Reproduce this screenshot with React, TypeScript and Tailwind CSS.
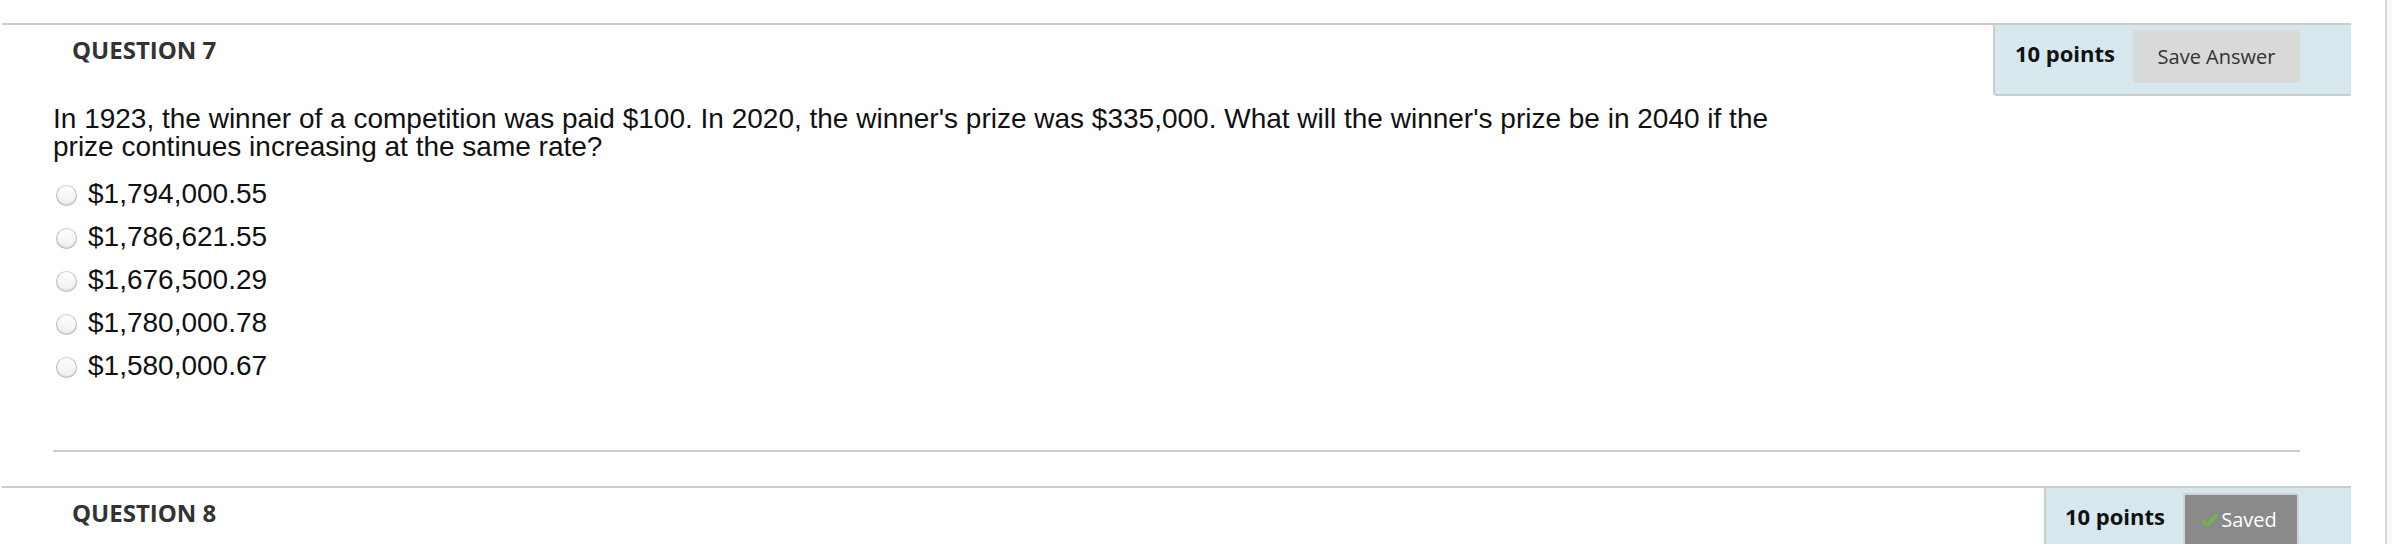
import React from "react";

const options = [
  "$1,794,000.55",
  "$1,786,621.55",
  "$1,676,500.29",
  "$1,780,000.78",
  "$1,580,000.67",
];

function Radio() {
  return (
    <span className="mt-[3px] h-[21px] w-[21px] shrink-0 rounded-full border border-[#b9b9b9] border-t-[#d0d0d0] bg-gradient-to-b from-white to-[#eeeeee] shadow-[inset_0_-1px_1px_rgba(0,0,0,0.1)]" />
  );
}

function Check() {
  return (
    <svg width="17" height="14" viewBox="0 0 17 14" className="shrink-0">
      <path
        d="M2 8 L6.5 12 L15.5 2.5"
        fill="none"
        stroke="#63c13a"
        strokeWidth="3"
        strokeLinecap="round"
        strokeLinejoin="round"
      />
    </svg>
  );
}

function Header({ title, saved }: { title: string; saved?: boolean }) {
  return (
    <div className="flex items-start justify-between">
      <h2 className="pl-[70px] pt-[7px] text-[24px] font-bold leading-[36px] text-[#333] [font-family:'Open_Sans',sans-serif]">
        {title}
      </h2>
      <div
        className={
          saved
            ? "flex h-[71px] items-start gap-[18px] rounded-bl-[4px] border-b-2 border-l-2 border-[#cccccc] bg-[#d6e8ee] pl-[19px] pr-[52px] pt-[5px]"
            : "flex h-[71px] items-start gap-[18px] rounded-bl-[4px] border-b-2 border-l-2 border-[#cccccc] bg-[#d6e8ee] pl-[20px] pr-[51px] pt-[5px]"
        }
      >
        <span className="mt-[8px] text-[22px] font-bold leading-[30px] text-[#111] [font-family:'Open_Sans',sans-serif]">
          10 points
        </span>
        {saved ? (
          <button className="flex h-[53px] w-[116px] items-center justify-center gap-[3px] rounded-[3px] border-2 border-[#d2d2d2] bg-[#8a8a8a] pr-[4px] text-[20px] text-white [font-family:'Open_Sans',sans-serif]">
            <Check />
            Saved
          </button>
        ) : (
          <button className="flex h-[53px] w-[167px] items-center justify-center rounded-[3px] bg-[#d9d9d9] text-[20px] text-[#333] [font-family:'Open_Sans',sans-serif]">
            Save Answer
          </button>
        )}
      </div>
    </div>
  );
}

export default function App() {
  return (
    <div className="flex h-[544px] w-full overflow-hidden bg-white">
      <div className="flex-1 pl-[2px] pr-[34px] pt-[23px]">
        {/* Question 7 */}
        <section className="border-t-2 border-[#cccccc]">
          <Header title="QUESTION 7" />
          <div className="px-[51px]">
            <p className="mt-[9px] max-w-[1740px] text-[28px] leading-[28px] text-[#111] [font-family:'Liberation_Sans',Arial,sans-serif]">
              In 1923, the winner of a competition was paid $100. In 2020, the winner's prize was $335,000. What
              will the winner's prize be in 2040 if the prize continues increasing at the same rate?
            </p>
            <ul className="mt-[11px]">
              {options.map((o) => (
                <li key={o} className="flex h-[43px] items-center pl-[3px]">
                  <Radio />
                  <span className="ml-[11px] text-[28px] leading-[43px] text-[#111] [font-family:'Liberation_Sans',Arial,sans-serif]">
                    {o}
                  </span>
                </li>
              ))}
            </ul>
            <div className="mb-[34px] mt-[63px] h-[2px] bg-[#cccccc]" />
          </div>
        </section>

        {/* Question 8 */}
        <section className="border-t-2 border-[#cccccc]">
          <Header title="QUESTION 8" saved />
        </section>
      </div>
      <div className="w-[7px] shrink-0 border-l-2 border-[#d6d6d6] bg-[#f7f7f7]" />
    </div>
  );
}
